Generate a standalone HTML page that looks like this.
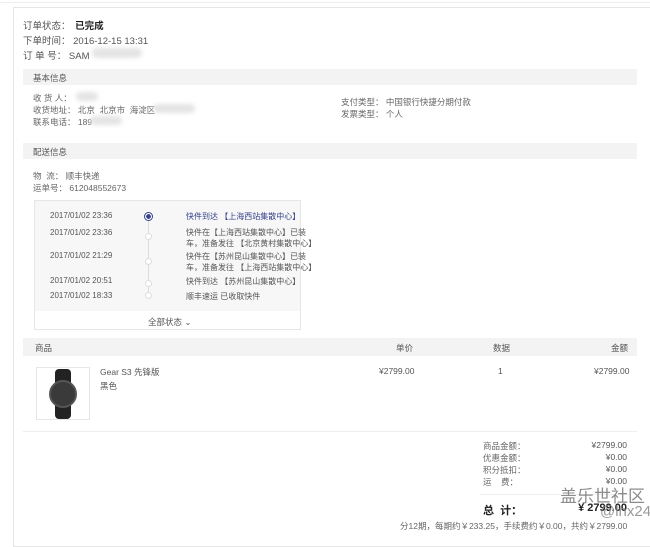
<!DOCTYPE html>
<html><head><meta charset="utf-8"><style>
*{margin:0;padding:0;box-sizing:border-box}
body{width:650px;height:536px;background:#fff;font-family:"Liberation Sans","Noto Sans CJK SC",sans-serif;color:#333;position:relative;overflow:hidden;font-size:8.5px}
.a{position:absolute;white-space:nowrap}
.bar{position:absolute;background:#f3f3f3;height:16px}
.blur{position:absolute;background:#e4e4e4;border-radius:6px;filter:blur(2px)}
.r{text-align:right}
.dot{position:absolute;width:7px;height:7px;border-radius:50%;border:1px solid #ddd;background:#fff}
.t{font-size:8px}
</style></head><body>
<div class="a" style="left:0;top:0;width:650px;height:3px;border-bottom:1px solid #eee"></div>
<div class="a" style="left:13px;top:7px;width:640px;height:540px;border:1px solid #e6e6e6"></div>

<div class="a" style="left:23px;top:18px;font-size:9.5px;color:#555">订单状态： <b style="color:#222;margin-left:2px">已完成</b></div>
<div class="a" style="left:23px;top:33px;font-size:9.5px;color:#555">下单时间： 2016-12-15 13:31</div>
<div class="a" style="left:23px;top:48px;font-size:9.5px;color:#555">订 单 号： SAM</div>
<div class="blur" style="left:92px;top:48px;width:50px;height:10px"></div>

<div class="bar" style="left:23px;top:69px;width:614px"></div>
<div class="a" style="left:33px;top:72px;color:#555">基本信息</div>
<div class="a" style="left:33px;top:92px;color:#666">收 货 人：</div>
<div class="blur" style="left:76px;top:92px;width:22px;height:9px"></div>
<div class="a" style="left:33px;top:104px;color:#666">收货地址： 北京 &nbsp;北京市 &nbsp;海淀区</div>
<div class="blur" style="left:153px;top:104px;width:42px;height:9px"></div>
<div class="a" style="left:33px;top:116px;color:#666">联系电话： 189</div>
<div class="blur" style="left:90px;top:116px;width:32px;height:9px"></div>
<div class="a" style="left:341px;top:96px;color:#666">支付类型： 中国银行快捷分期付款</div>
<div class="a" style="left:341px;top:108px;color:#666">发票类型： 个人</div>

<div class="bar" style="left:23px;top:143px;width:614px"></div>
<div class="a" style="left:33px;top:146px;color:#555">配送信息</div>
<div class="a" style="left:33px;top:170px;color:#666">物 &nbsp;流： 顺丰快递</div>
<div class="a" style="left:33px;top:182px;color:#666">运单号： 612048552673</div>

<div class="a" style="left:34px;top:200px;width:267px;height:130px;border:1px solid #e6e6e6;background:#f7f7f7"></div>
<div class="a" style="left:35px;top:311px;width:265px;height:18px;background:#fff"></div>
<div class="a" style="left:148px;top:316px;color:#555">全部状态 ⌄</div>
<div class="a" style="left:148px;top:216px;width:1px;height:80px;background:#ddd"></div>
<div class="a t" style="left:50px;top:211px;color:#555">2017/01/02 23:36</div>
<div class="a t" style="left:50px;top:228px;color:#555">2017/01/02 23:36</div>
<div class="a t" style="left:50px;top:251px;color:#555">2017/01/02 21:29</div>
<div class="a t" style="left:50px;top:276px;color:#555">2017/01/02 20:51</div>
<div class="a t" style="left:50px;top:291px;color:#555">2017/01/02 18:33</div>
<div class="dot" style="left:144px;top:212px;border-color:#34408c;width:9px;height:9px;background:radial-gradient(#34408c 45%,#fff 50%)"></div>
<div class="dot" style="left:145px;top:233px"></div>
<div class="dot" style="left:145px;top:258px"></div>
<div class="dot" style="left:145px;top:280px"></div>
<div class="dot" style="left:145px;top:292px"></div>
<div class="a t" style="left:186px;top:211px;color:#34408c">快件到达 【上海西站集散中心】</div>
<div class="a t" style="left:186px;top:227px;color:#555;line-height:11px">快件在【上海西站集散中心】已装<br>车，准备发往 【北京黄村集散中心】</div>
<div class="a t" style="left:186px;top:251px;color:#555;line-height:11px">快件在【苏州昆山集散中心】已装<br>车，准备发往 【上海西站集散中心】</div>
<div class="a t" style="left:186px;top:276px;color:#555">快件到达 【苏州昆山集散中心】</div>
<div class="a t" style="left:186px;top:291px;color:#555">顺丰速运 已收取快件</div>

<div class="bar" style="left:23px;top:338px;width:614px;height:18px"></div>
<div class="a" style="left:35px;top:342px;color:#555">商品</div>
<div class="a" style="left:396px;top:342px;color:#555">单价</div>
<div class="a" style="left:493px;top:342px;color:#555">数据</div>
<div class="a" style="left:611px;top:342px;color:#555">金额</div>
<div class="a" style="left:36px;top:367px;width:54px;height:53px;border:1px solid #e6e6e6"></div>
<div class="a" style="left:55px;top:369px;width:16px;height:50px;background:#222;border-radius:4px"></div>
<div class="a" style="left:49px;top:380px;width:28px;height:28px;background:#3a3a3a;border-radius:50%;border:2px solid #555"></div>
<div class="a" style="left:100px;top:366px;color:#555">Gear S3 先锋版</div>
<div class="a" style="left:100px;top:380px;color:#555">黑色</div>
<div class="a" style="left:379px;top:366px;color:#555">¥2799.00</div>
<div class="a" style="left:498px;top:366px;color:#555">1</div>
<div class="a" style="left:594px;top:366px;color:#555">¥2799.00</div>
<div class="a" style="left:23px;top:431px;width:614px;height:1px;background:#eee"></div>

<div class="a" style="left:483px;top:440px;color:#666">商品金额：</div>
<div class="a" style="left:483px;top:452px;color:#666">优惠金额：</div>
<div class="a" style="left:483px;top:464px;color:#666">积分抵扣：</div>
<div class="a" style="left:483px;top:476px;color:#666">运 &nbsp; &nbsp;费：</div>
<div class="a r" style="left:560px;width:67px;top:440px;color:#555">¥2799.00</div>
<div class="a r" style="left:560px;width:67px;top:452px;color:#555">¥0.00</div>
<div class="a r" style="left:560px;width:67px;top:464px;color:#555">¥0.00</div>
<div class="a r" style="left:560px;width:67px;top:476px;color:#555">¥0.00</div>
<div class="a" style="left:480px;top:494px;width:150px;height:1px;background:#eee"></div>
<div class="a" style="left:483px;top:502px;font-size:11px;font-weight:bold;color:#222">总 &nbsp;计：</div>
<div class="a r" style="left:560px;width:67px;top:502px;font-size:11px;font-weight:bold;color:#222">¥ 2799.00</div>
<div class="a r" style="left:400px;width:227px;top:520px;color:#666">分12期，每期约￥233.25，手续费约￥0.00，共约￥2799.00</div>

<div class="a" style="left:560px;top:482px;font-size:17px;color:#777;opacity:.85">盖乐世社区</div>
<div class="a" style="left:600px;top:503px;font-size:15px;color:#888;opacity:.85">@lnx24</div>
</body></html>
